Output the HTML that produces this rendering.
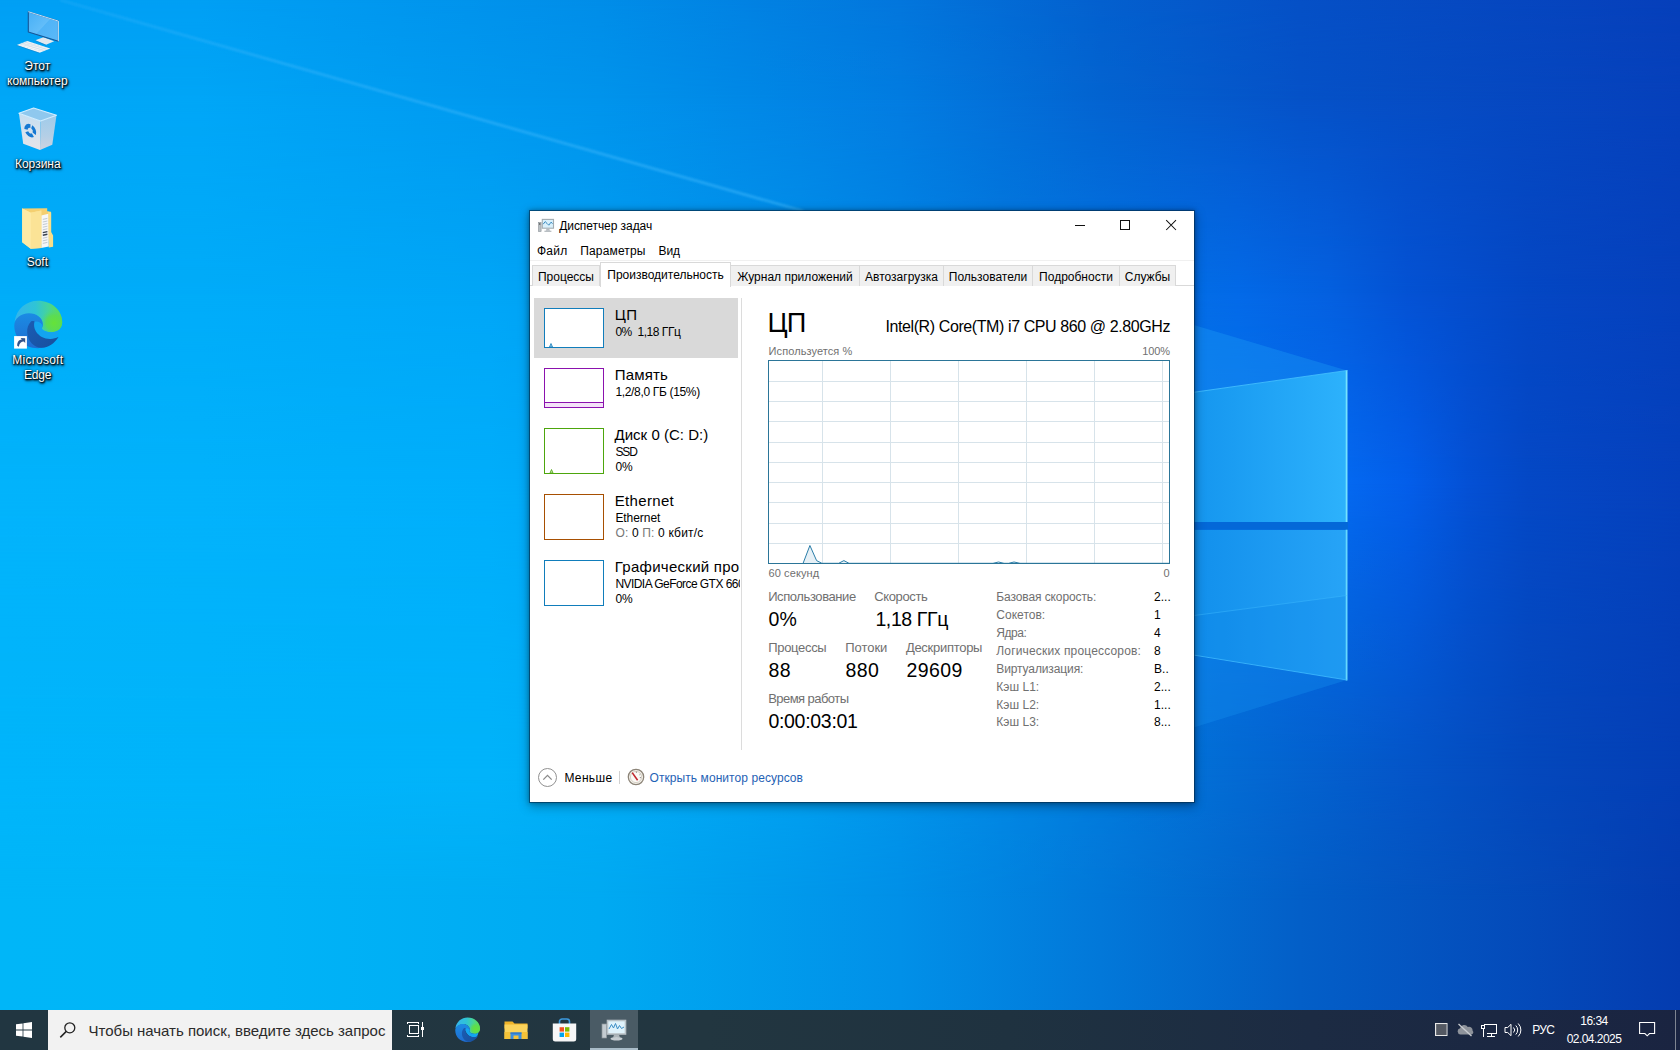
<!DOCTYPE html>
<html lang="ru">
<head>
<meta charset="utf-8">
<title>Диспетчер задач</title>
<style>
*{box-sizing:border-box;margin:0;padding:0}
html,body{width:1680px;height:1050px;overflow:hidden;background:#0078d7}
body{font-family:"Liberation Sans","DejaVu Sans",sans-serif;font-size:12px;color:#000;position:relative}
.abs{position:absolute}
#wall{position:absolute;left:0;top:0;width:1680px;height:1050px}
/* desktop icons */
.dicon{position:absolute;width:76px;text-align:center;color:#fff;font-size:12px;line-height:15px;
 text-shadow:0 1px 2px rgba(0,0,0,.95),0 0 3px rgba(0,0,0,.8),1px 1px 1px rgba(0,0,0,.7)}
.dicon svg{display:block;margin:0 auto}
.dl{position:absolute;margin-top:1px;width:100px;text-align:center;color:#fff;font-size:12px;line-height:1;white-space:nowrap;
 text-shadow:1px 1px 1.500px #000,0 1px 2px rgba(0,0,0,.85),1px 2px 3px rgba(0,0,0,.6),0 0 3px rgba(0,0,0,.55)}
/* taskbar */
#taskbar{position:absolute;left:0;top:1010px;width:1680px;height:40px;
 background:linear-gradient(90deg,#213641 0%,#223640 42%,#1f3240 60%,#1c2b43 78%,#1a2441 100%)}
#search{position:absolute;left:48px;top:0;width:344px;height:40px;background:#f2f2f2;color:#2b2b2b;font-size:15px}
#search span{position:absolute;left:40.600px;top:12.700px;white-space:nowrap;line-height:1;letter-spacing:-0.020px}
.tray{line-height:1}
.tray{position:absolute;color:#fff;font-size:12px;white-space:nowrap}
/* window */
#win{position:absolute;left:529px;top:210px;width:666px;height:593px;background:#fff;border:1px solid rgba(0,45,80,.6);background-clip:padding-box;
 box-shadow:0 3px 10px rgba(0,0,0,.34),0 0 4px rgba(0,0,0,.25)}
#win .t{position:absolute;white-space:nowrap;line-height:1}
.gray{color:#6d6d6d}
.tab{position:absolute;top:54px;height:21px;border:1px solid #d9d9d9;border-bottom:none;background:#f0f0f0;font-size:12px;text-align:center;line-height:22.800px;white-space:nowrap}
.tab.sel{top:51px;height:25px;background:#fff;line-height:25px;z-index:2}
.thumb{position:absolute;left:14px;width:60px;background:#fff;border:1px solid #117dbb}
.sname{position:absolute;left:84px;font-size:15px;white-space:nowrap;line-height:1}
.ssub{position:absolute;left:85px;font-size:12px;white-space:nowrap;line-height:1}
.lab{position:absolute;font-size:12.5px;color:#6d6d6d;white-space:nowrap;line-height:1}
.val{position:absolute;font-size:19px;white-space:nowrap;line-height:1}
.rl{position:absolute;left:466px;font-size:12px;color:#6d6d6d;white-space:nowrap;line-height:1}
.rv{position:absolute;left:624px;font-size:12px;white-space:nowrap;line-height:1}
</style>
</head>
<body>
<!--WALL-->
<svg id="wall" width="1680" height="1050" viewBox="0 0 1680 1050">
<defs>
<linearGradient id="wr0" x1="0" y1="0" x2="1" y2="0"><stop offset="0.0000" stop-color="#009ff4"/><stop offset="0.1190" stop-color="#009ff4"/><stop offset="0.3571" stop-color="#008de8"/><stop offset="0.5357" stop-color="#0276dc"/><stop offset="0.6548" stop-color="#0360ce"/><stop offset="0.7738" stop-color="#0550c6"/><stop offset="1.0000" stop-color="#063fba"/></linearGradient>
<linearGradient id="wm0" x1="0" y1="0" x2="0" y2="1050" gradientUnits="userSpaceOnUse"><stop offset="0.0000" stop-color="#fff" stop-opacity="1"/><stop offset="0.0952" stop-color="#fff" stop-opacity="0"/></linearGradient>
<mask id="wk0" maskUnits="userSpaceOnUse" x="0" y="0" width="1680" height="1050"><rect width="1680" height="1050" fill="url(#wm0)"/></mask>
<linearGradient id="wr1" x1="0" y1="0" x2="1" y2="0"><stop offset="0.0000" stop-color="#00a7f7"/><stop offset="0.1190" stop-color="#00a6f7"/><stop offset="0.3571" stop-color="#0094ec"/><stop offset="0.5357" stop-color="#027ce1"/><stop offset="0.6548" stop-color="#0364d1"/><stop offset="0.7738" stop-color="#0552c8"/><stop offset="1.0000" stop-color="#0640bb"/></linearGradient>
<linearGradient id="wm1" x1="0" y1="0" x2="0" y2="1050" gradientUnits="userSpaceOnUse"><stop offset="0.0952" stop-color="#fff" stop-opacity="1"/><stop offset="0.2810" stop-color="#fff" stop-opacity="0"/></linearGradient>
<mask id="wk1" maskUnits="userSpaceOnUse" x="0" y="0" width="1680" height="1050"><rect width="1680" height="1050" fill="url(#wm1)"/></mask>
<linearGradient id="wr2" x1="0" y1="0" x2="1" y2="0"><stop offset="0.0000" stop-color="#00adf9"/><stop offset="0.1190" stop-color="#00acf9"/><stop offset="0.2905" stop-color="#00a6f7"/><stop offset="0.4762" stop-color="#0090ea"/><stop offset="0.5952" stop-color="#027ae0"/><stop offset="0.7369" stop-color="#036ae8"/><stop offset="0.7917" stop-color="#0460e0"/><stop offset="0.8381" stop-color="#0452d4"/><stop offset="0.9095" stop-color="#0447c4"/><stop offset="1.0000" stop-color="#0540bc"/></linearGradient>
<linearGradient id="wm2" x1="0" y1="0" x2="0" y2="1050" gradientUnits="userSpaceOnUse"><stop offset="0.2810" stop-color="#fff" stop-opacity="1"/><stop offset="0.4571" stop-color="#fff" stop-opacity="0"/></linearGradient>
<mask id="wk2" maskUnits="userSpaceOnUse" x="0" y="0" width="1680" height="1050"><rect width="1680" height="1050" fill="url(#wm2)"/></mask>
<linearGradient id="wr3" x1="0" y1="0" x2="1" y2="0"><stop offset="0.0000" stop-color="#02b3fb"/><stop offset="0.1190" stop-color="#02b2fb"/><stop offset="0.2905" stop-color="#00aefb"/><stop offset="0.4762" stop-color="#0096ee"/><stop offset="0.5952" stop-color="#0280e6"/><stop offset="0.7369" stop-color="#0570ec"/><stop offset="0.8036" stop-color="#0468f0"/><stop offset="0.8381" stop-color="#035eea"/><stop offset="0.8750" stop-color="#0450d4"/><stop offset="0.9095" stop-color="#0448c6"/><stop offset="1.0000" stop-color="#0540bc"/></linearGradient>
<linearGradient id="wm3" x1="0" y1="0" x2="0" y2="1050" gradientUnits="userSpaceOnUse"><stop offset="0.4571" stop-color="#fff" stop-opacity="1"/><stop offset="0.7333" stop-color="#fff" stop-opacity="0"/></linearGradient>
<mask id="wk3" maskUnits="userSpaceOnUse" x="0" y="0" width="1680" height="1050"><rect width="1680" height="1050" fill="url(#wm3)"/></mask>
<linearGradient id="wr4" x1="0" y1="0" x2="1" y2="0"><stop offset="0.0000" stop-color="#00b5fb"/><stop offset="0.1190" stop-color="#00b4fa"/><stop offset="0.2905" stop-color="#01b3fa"/><stop offset="0.4762" stop-color="#00a0f0"/><stop offset="0.5952" stop-color="#0188e4"/><stop offset="0.7369" stop-color="#036ad3"/><stop offset="0.8381" stop-color="#0455c8"/><stop offset="0.9095" stop-color="#0448bc"/><stop offset="1.0000" stop-color="#043eb5"/></linearGradient>
<linearGradient id="wm4" x1="0" y1="0" x2="0" y2="1050" gradientUnits="userSpaceOnUse"><stop offset="0.7333" stop-color="#fff" stop-opacity="1"/><stop offset="0.8571" stop-color="#fff" stop-opacity="0"/></linearGradient>
<mask id="wk4" maskUnits="userSpaceOnUse" x="0" y="0" width="1680" height="1050"><rect width="1680" height="1050" fill="url(#wm4)"/></mask>
<linearGradient id="wr5" x1="0" y1="0" x2="1" y2="0"><stop offset="0.0000" stop-color="#00b6f8"/><stop offset="0.1190" stop-color="#00b5f8"/><stop offset="0.3571" stop-color="#00aaf2"/><stop offset="0.5357" stop-color="#0190e8"/><stop offset="0.6548" stop-color="#0278d9"/><stop offset="0.7738" stop-color="#035fc8"/><stop offset="1.0000" stop-color="#043cb0"/></linearGradient>
<linearGradient id="pane" x1="1195" y1="0" x2="1347" y2="0" gradientUnits="userSpaceOnUse"><stop offset="0" stop-color="#1596ef"/><stop offset="1" stop-color="#2db2fc"/></linearGradient>
<linearGradient id="pane2" x1="1195" y1="0" x2="1347" y2="0" gradientUnits="userSpaceOnUse"><stop offset="0" stop-color="#1290ec"/><stop offset="1" stop-color="#27a4f7"/></linearGradient>
<linearGradient id="rayg" x1="60" y1="0" x2="810" y2="0" gradientUnits="userSpaceOnUse"><stop offset="0" stop-color="#3cb6fb" stop-opacity=".25"/><stop offset=".3" stop-color="#3cb6fb" stop-opacity=".55"/><stop offset="1" stop-color="#3cb6fb" stop-opacity=".6"/></linearGradient>
<filter id="b1" x="-5%" y="-5%" width="110%" height="110%"><feGaussianBlur stdDeviation="1"/></filter>
</defs>
<rect width="1680" height="1050" fill="url(#wr5)"/>
<rect width="1680" height="901" fill="url(#wr4)" mask="url(#wk4)"/>
<rect width="1680" height="771" fill="url(#wr3)" mask="url(#wk3)"/>
<rect width="1680" height="481" fill="url(#wr2)" mask="url(#wk2)"/>
<rect width="1680" height="296" fill="url(#wr1)" mask="url(#wk1)"/>
<rect width="1680" height="101" fill="url(#wr0)" mask="url(#wk0)"/>
<!-- ray line to top-left -->
<line x1="60" y1="0" x2="803" y2="211" stroke="url(#rayg)" stroke-width="2.6" filter="url(#b1)"/>
<!-- rays near logo -->
<polygon points="1150,312 1347,370.5 1150,398.5" fill="#1c9cf4" opacity=".38"/>
<polygon points="1150,741 1347,680 1150,649" fill="#1590ee" opacity=".36"/>
<!-- panes -->
<polygon points="1150,398.5 1347,370.5 1347,522 1150,522" fill="url(#pane)"/>
<polygon points="1150,529.7 1347,529.7 1347,680 1150,648" fill="url(#pane2)"/>
<polygon points="1150,621.3 1347,595.5 1347,680 1150,648" fill="#0a80e6" opacity=".28"/>
<rect x="1150" y="522" width="198" height="7.7" fill="#0468d8"/>
<line x1="1346.6" y1="370" x2="1346.6" y2="522" stroke="#74e2ff" stroke-width="1.8"/>
<line x1="1346.6" y1="529.7" x2="1346.6" y2="680.5" stroke="#66d8ff" stroke-width="1.8"/>
<line x1="1150" y1="398.5" x2="1347" y2="370.5" stroke="#48c4ff" stroke-width="1" opacity=".8"/>
<line x1="1150" y1="648" x2="1347" y2="680" stroke="#40bcff" stroke-width="1" opacity=".8"/>
<line x1="1150" y1="621.3" x2="1347" y2="595.5" stroke="#40bcff" stroke-width="1" opacity=".45"/>
</svg>

<!--/WALL-->
<!--ICONS-->
<!-- This PC -->
<svg class="abs" style="left:8px;top:4px" width="60" height="56" viewBox="8 4 60 56">
<defs><linearGradient id="scr" x1="28" y1="12" x2="58" y2="40" gradientUnits="userSpaceOnUse"><stop offset="0" stop-color="#46aff6"/><stop offset=".5" stop-color="#62bdf9"/><stop offset=".52" stop-color="#50b4f7"/><stop offset="1" stop-color="#5ab8f8"/></linearGradient></defs>
<polygon points="35.300,40.300 43.500,37.300 54.200,41.300 46,44.800" fill="#e3e8ee"/>
<polygon points="35.300,40.300 46,44.800 46,45.600 35.300,41.100" fill="#1d6cb0" opacity=".55"/>
<polygon points="28.300,11.700 58.400,21.100 58.400,41.300 28.300,32" fill="url(#scr)" stroke="#175596" stroke-width="1.100" stroke-linejoin="round"/>
<path d="M28.300 11.700L58.400 21.100V41.300" fill="none" stroke="#d6efff" stroke-width=".9"/>
<polygon points="16.800,45 27.300,40.900 50.300,48.600 39.600,52.800" fill="#eef3f7"/>
<polygon points="16.800,45 39.600,52.800 39.600,53.600 16.800,45.800" fill="#1d6cb0" opacity=".45"/>
<path d="M20 45.100l8.800-3.400M23.500 46.300l8.800-3.400M27 47.500l8.800-3.400M30.500 48.700l8.800-3.400M34 49.900l8.800-3.400M37.500 51.100l8.800-3.400M21.500 43.200l22.600 7.600M24.500 42l22.600 7.600" stroke="#cdd9e3" stroke-width=".55"/>
</svg>
<!-- Recycle bin -->
<svg class="abs" style="left:8px;top:100px" width="60" height="56" viewBox="8 100 60 56">
<defs>
<linearGradient id="binL" x1="0" y1="113" x2="0" y2="150" gradientUnits="userSpaceOnUse"><stop offset="0" stop-color="#c4ddf0"/><stop offset=".6" stop-color="#d9e4ee"/><stop offset="1" stop-color="#e6e3e8"/></linearGradient>
<linearGradient id="binR" x1="0" y1="115" x2="0" y2="150" gradientUnits="userSpaceOnUse"><stop offset="0" stop-color="#9fcbea"/><stop offset=".6" stop-color="#b4cfe6"/><stop offset="1" stop-color="#cdd3e0"/></linearGradient>
</defs>
<polygon points="18.900,113.300 40.500,121.100 40,149.900 23.200,143.700" fill="url(#binL)"/>
<polygon points="40.500,121.100 56.500,115.200 52.300,144.800 40,149.900" fill="url(#binR)"/>
<polygon points="18.900,113.300 33.600,108 56.500,115.200 40.500,121.100" fill="#8fc8ee" stroke="#d4eeff" stroke-width="1.100" stroke-linejoin="round"/>
<g transform="translate(30.300,130.600) skewY(19) scale(.92,1)"><circle r="4.600" fill="none" stroke="#1679d2" stroke-width="3.700" stroke-dasharray="7.400 2.230" transform="rotate(-70)"/></g>
</svg>
<!-- Folder Soft -->
<svg class="abs" style="left:8px;top:200px" width="60" height="56" viewBox="8 200 60 56">
<defs><linearGradient id="fld" x1="22" y1="0" x2="42" y2="0" gradientUnits="userSpaceOnUse"><stop offset="0" stop-color="#fdeaa8"/><stop offset=".45" stop-color="#fce69c"/><stop offset="1" stop-color="#fae190"/></linearGradient></defs>
<polygon points="22.200,208.500 47.200,208.200 47.200,211.200 51,211.800 51,230 47,246 30,240" fill="#f4cf70"/>
<polygon points="41.200,215.500 48.500,213.800 48.800,246.600 41.200,248" fill="#f6f7f8"/>
<path d="M42.800 219.400l4.600-1M42.800 222l4.600-1M42.800 224.600l4.600-1M42.800 227.200l4.600-1M42.800 229.800l4.600-1M42.800 238.200l4.600-1M42.800 240.800l4.600-1M42.800 243.400l4.600-1" stroke="#b4bcc6" stroke-width=".8"/>
<path d="M42.800 232.600l4.600-1M42.800 235.200l4.600-1" stroke="#39424e" stroke-width="1.400"/>
<polygon points="22.200,208.500 30.800,212.700 41.300,210.600 41.300,248 30.700,248.800 22.200,242.200" fill="url(#fld)"/>
<polygon points="30.800,212.700 41.300,210.600 41.300,248 30.700,248.800" fill="#fbe396"/>
<polygon points="22.200,208.500 30.800,212.700 30.700,248.800 22.200,242.200" fill="#fdeaa6"/>
<polygon points="47.600,211.600 51.200,212.400 51.200,232 53.100,235.500 53.100,246.800 48.800,247.400 48.500,213.800" fill="#f9de8a"/>
</svg>
<!-- Edge -->
<svg class="abs" style="left:8px;top:296px" width="60" height="56" viewBox="0 0 60 56">
<defs>
<linearGradient id="eg1" x1="6" y1="0" x2="54" y2="0" gradientUnits="userSpaceOnUse"><stop offset="0" stop-color="#35b4ee"/><stop offset=".45" stop-color="#2fc4d6"/><stop offset=".72" stop-color="#46d49a"/><stop offset="1" stop-color="#62e040"/></linearGradient>
<radialGradient id="eg2" cx="46" cy="27" r="14" gradientUnits="userSpaceOnUse"><stop offset="0" stop-color="#66e238"/><stop offset=".55" stop-color="#5cdc50" stop-opacity=".9"/><stop offset="1" stop-color="#4cd488" stop-opacity="0"/></radialGradient>
<linearGradient id="eg3" x1="0" y1="17" x2="0" y2="52" gradientUnits="userSpaceOnUse"><stop offset="0" stop-color="#1b8ce4"/><stop offset="1" stop-color="#1f6cd0"/></linearGradient>
<linearGradient id="eg4" x1="20" y1="26" x2="48" y2="50" gradientUnits="userSpaceOnUse"><stop offset="0" stop-color="#1a5cb4"/><stop offset="1" stop-color="#18509e"/></linearGradient>
<g id="edgelogo">
<path d="M6.600 25.500C8.500 12.500 18.500 4.700 30 4.700C43.500 4.700 54.200 14 54.200 26C54.200 32.500 49.500 36.200 43.500 36.200C39 36.200 35.200 35 33.600 32.500C35.500 29.500 35 24 30.500 20.500C24 16 13 17.500 6.600 25.500Z" fill="url(#eg1)"/>
<path d="M6.600 25.500C8.500 12.500 18.500 4.700 30 4.700C43.500 4.700 54.200 14 54.200 26C54.200 32.500 49.500 36.200 43.500 36.200C39 36.200 35.200 35 33.600 32.500C35.500 29.500 35 24 30.500 20.500C24 16 13 17.500 6.600 25.500Z" fill="url(#eg2)"/>
<path d="M6.300 29.500C6.300 22.500 13 17.200 21 17.200C28.500 17.200 34.800 22 34.800 28C34.800 30 34.200 31.500 33.600 32.500C31.500 30 28 29.500 25.500 31C22 33.500 22 41 27 46C30 49 34.500 50.500 38.500 50.800C35.500 51.800 32.500 52.200 29.500 52.200C16.500 52.200 6.300 42.500 6.300 29.500Z" fill="url(#eg3)"/>
<path d="M25 26.500C28 24.500 32.500 25.500 34.300 29C34.300 31 33.900 32 33.600 32.500C35.200 35 39 36.200 43.500 36.200C46.500 36.200 49 35.300 51 33.800C50.500 38 49 41 46.500 43C41 44 35 42.500 31 38.500C27.500 35 25.500 30.500 25 26.500Z" fill="#13a4f0"/>
<path d="M23 25.400C20 28.500 18.800 32.500 19.200 37C19.800 44.500 25.500 51.700 33.500 51.700C40.500 51.700 46.500 47.500 50.600 40.800C48 42.200 45.500 42.900 42.500 43C36.500 43.200 31 40.200 28 35.500C26 32.300 25.600 28.500 26.500 25.400C25.300 25 24 25 23 25.400Z" fill="url(#eg4)"/>
</g>
</defs>
<use href="#edgelogo"/>
<rect x="6.100" y="40.100" width="12.800" height="12.500" fill="#fff"/>
<path d="M9.200 49.800C9 46 11 43.600 13.800 43.400L12.600 42.100L17.200 42.300L17.200 46.900L15.800 45.500C13.200 45.500 11.500 47 10.800 50.800Z" fill="#34548c"/>
</svg>

<span class="dl" id="dl0" style="left:-12.7px;top:59.44px;">Этот</span>
<span class="dl" id="dl1" style="left:-12.7px;top:73.84px;">компьютер</span>
<span class="dl" id="dl2" style="left:-12.2px;top:157.24px;">Корзина</span>
<span class="dl" id="dl3" style="left:-12.7px;top:254.74px;">Soft</span>
<span class="dl" id="dl4" style="left:-12.2px;top:353.14px;letter-spacing:.25px;">Microsoft</span>
<span class="dl" id="dl5" style="left:-12.4px;top:368.44px;letter-spacing:-.2px;">Edge</span>

<!--/ICONS-->
<!--WINDOW-->
<div id="win">
<!-- title icon -->
<svg class="abs" style="left:7px;top:6px" width="18" height="18" viewBox="0 0 18 18">
<rect x="1.5" y="5.5" width="2.6" height="9" fill="#b9c0c4" stroke="#8a9298" stroke-width=".6"/>
<circle cx="2.8" cy="7" r=".7" fill="#333"/>
<rect x="5.3" y="2.4" width="11.2" height="8.8" fill="#d9f0fb" stroke="#a3acb1" stroke-width="1.1"/>
<polyline points="6.2,7.2 8.2,4.6 10,6.4 11.8,8.2 14,5.2 15.6,6.6" fill="none" stroke="#2a7fb8" stroke-width=".9"/>
<path d="M9.6 11.6h2.6l.8 2.2h-4.2z" fill="#b4bbc0"/>
<rect x="7.4" y="13.7" width="7" height="1.1" fill="#a9b0b5"/>
</svg>
<!-- caption buttons -->
<svg class="abs" style="left:526px;top:0" width="138" height="30" viewBox="0 0 138 30" shape-rendering="crispEdges">
<rect x="19" y="14" width="10" height="1" fill="#111"/>
<rect x="64.5" y="9.5" width="9" height="9" fill="none" stroke="#111" stroke-width="1"/>
<g shape-rendering="geometricPrecision" stroke="#111" stroke-width="1.05" fill="none"><path d="M110.2 9.2l9.8 9.8M120 9.2l-9.8 9.8"/></g>
</svg>
<div class="abs" style="left:0;top:49px;width:664px;height:1px;background:#f0f0f0"></div>
<!-- tab strip -->
<div class="abs" style="left:0;top:74px;width:664px;height:1px;background:#d9d9d9"></div>
<div class="tab" style="left:2px;width:68px"><span id="tab0">Процессы</span></div>
<div class="tab sel" style="left:70px;width:131px"><span id="tab1">Производительность</span></div>
<div class="tab" style="left:200px;width:130px"><span id="tab2">Журнал приложений</span></div>
<div class="tab" style="left:329px;width:85px"><span id="tab3">Автозагрузка</span></div>
<div class="tab" style="left:413px;width:90px"><span id="tab4">Пользователи</span></div>
<div class="tab" style="left:502px;width:88px"><span id="tab5">Подробности</span></div>
<div class="tab" style="left:589px;width:57px"><span id="tab6">Службы</span></div>
<!-- sidebar -->
<div class="abs" style="left:4px;top:87px;width:206px;height:460px;overflow:hidden" id="side">
 <div class="abs" style="left:0;top:0;width:204px;height:60px;background:#d9d9d9"></div>
 <div class="thumb" style="left:10px;top:10px;height:40px;border-color:#117dbb"><svg width="58" height="38" style="display:block"><path d="M4.5 38L6 34.5L7.5 38Z" fill="#9fcbe6" stroke="#117dbb" stroke-width=".8"/></svg></div>
 <div class="thumb" style="left:10px;top:70px;height:40px;border-color:#8b12ae"><div style="position:absolute;left:0;right:0;bottom:0;height:5px;background:#f4e2f8;border-top:1px solid #8b12ae"></div></div>
 <div class="thumb" style="left:10px;top:130px;height:46px;border-color:#4da60c"><svg width="58" height="44" style="display:block"><path d="M5 44L6.5 40.5L8 44Z" fill="#cfe8b8" stroke="#4da60c" stroke-width=".8"/></svg></div>
 <div class="thumb" style="left:10px;top:196px;height:46px;border-color:#a74f01"></div>
 <div class="thumb" style="left:10px;top:262px;height:46px;border-color:#117dbb"></div>
</div>
<div class="abs" style="left:211px;top:87px;width:1px;height:452px;background:#dcdcdc"></div>
<!-- graph -->
<svg class="abs" style="left:238px;top:149px" width="402" height="204" viewBox="0 0 402 204">
<rect x="0" y="0" width="402" height="204" fill="#fff"/>
<g stroke="#d7e3ea" stroke-width="1" shape-rendering="crispEdges">
<path d="M54.5 1V203M122.5 1V203M190.5 1V203M258.5 1V203M326.5 1V203M394.5 1V203"/>
<path d="M1 21.500H401M1 41.500H401M1 61.500H401M1 82.500H401M1 102.500H401M1 122.500H401M1 142.500H401M1 163.500H401M1 183.500H401"/>
</g>
<path d="M0.5 203.500 L35 203.500 L41.900 185.500 L48.600 200.600 L53.900 203.300 L70.700 203.300 L75.900 200.600 L81 203.300 L225 203.300 L230.500 202 L236 203.300 L240.600 203.300 L246 202 L252 203.300 L401.500 203.300" fill="#e6f0f6" stroke="#2a7da8" stroke-width="1"/>
<rect x=".5" y=".5" width="401" height="203" fill="none" stroke="#2b7598" stroke-width="1" shape-rendering="crispEdges"/>
</svg>
<!-- footer -->
<svg class="abs" style="left:7px;top:556px" width="22" height="22" viewBox="0 0 22 22"><circle cx="10.5" cy="10.5" r="9" fill="#fff" stroke="#919191" stroke-width="1"/><path d="M6.3 12.6L10.5 8.4L14.7 12.6" fill="none" stroke="#8a8a8a" stroke-width="1.3"/></svg>
<div class="abs" style="left:89px;top:560px;width:1px;height:13px;background:#d0d0d0"></div>
<svg class="abs" style="left:97px;top:557px" width="18" height="18" viewBox="0 0 18 18"><circle cx="9" cy="9" r="7.7" fill="#f4f1ea" stroke="#8c8478" stroke-width="1.3"/><circle cx="9" cy="9" r="5.6" fill="#fbfaf6" stroke="#c9c2b4" stroke-width=".7"/><path d="M5.2 4.6L10.6 12.2" stroke="#c0272d" stroke-width="1.6" fill="none"/><path d="M9.4 3.6v1.3M13.4 6.2l-1 .7M14 9.6h-1.2" stroke="#666" stroke-width=".7"/></svg>
<span class="t" id="t0" style="top:9.04px;font-size:12px;left:29.20px;letter-spacing:-0.062px;">Диспетчер задач</span>
<span class="t" id="t1" style="top:33.84px;font-size:12px;left:7.00px;letter-spacing:0.231px;">Файл</span>
<span class="t" id="t2" style="top:33.84px;font-size:12px;left:50.20px;letter-spacing:0.163px;">Параметры</span>
<span class="t" id="t3" style="top:33.84px;font-size:12px;left:128.60px;letter-spacing:-0.093px;">Вид</span>
<span class="t" id="t4" style="top:95.80px;font-size:15px;left:84.80px;letter-spacing:0.400px;">ЦП</span>
<span class="t" id="t5" style="top:114.64px;font-size:12px;left:85.40px;letter-spacing:-0.470px;">0%&nbsp; 1,18 ГГц</span>
<span class="t" id="t6" style="top:156.00px;font-size:15px;left:84.80px;letter-spacing:0.175px;">Память</span>
<span class="t" id="t7" style="top:174.84px;font-size:12px;left:85.40px;letter-spacing:-0.332px;">1,2/8,0 ГБ (15%)</span>
<span class="t" id="t8" style="top:216.10px;font-size:15px;left:84.50px;letter-spacing:0.026px;">Диск 0 (C: D:)</span>
<span class="t" id="t9" style="top:234.64px;font-size:12px;left:85.40px;letter-spacing:-1.100px;">SSD</span>
<span class="t" id="t10" style="top:249.74px;font-size:12px;left:85.40px;letter-spacing:0.048px;">0%</span>
<span class="t" id="t11" style="top:282.20px;font-size:15px;left:84.80px;letter-spacing:0.323px;">Ethernet</span>
<span class="t" id="t12" style="top:300.84px;font-size:12px;left:85.40px;letter-spacing:-0.054px;">Ethernet</span>
<span class="t" id="t13" style="top:316.14px;font-size:12px;left:85.40px;letter-spacing:0.168px;"><span style="color:#767676">О:</span> 0 <span style="color:#767676">П:</span> 0 кбит/с</span>
<span class="t" id="t14" style="top:348.20px;font-size:15px;left:84.80px;letter-spacing:0.27px;width:125.5px;overflow:hidden;height:18px">Графический процессор 0</span>
<span class="t" id="t15" style="top:366.84px;font-size:12px;left:85.40px;letter-spacing:-0.55px;width:124.9px;overflow:hidden;height:15px">NVIDIA GeForce GTX 660</span>
<span class="t" id="t16" style="top:381.54px;font-size:12px;left:85.40px;letter-spacing:0.048px;">0%</span>
<span class="t" id="t17" style="top:97.98px;font-size:27.2px;left:237.60px;letter-spacing:-0.9px">ЦП</span>
<span class="t" id="t18" style="top:107.76px;font-size:16px;right:24.00px;letter-spacing:-0.404px;">Intel(R) Core(TM) i7 CPU 860 @ 2.80GHz</span>
<span class="t" id="t19" style="top:135.19px;font-size:11px;left:238.60px;letter-spacing:0.076px;color:#707070">Используется %</span>
<span class="t" id="t20" style="top:135.19px;font-size:11px;right:24.00px;letter-spacing:-0.105px;color:#707070">100%</span>
<span class="t" id="t21" style="top:356.89px;font-size:11px;left:238.40px;letter-spacing:0.120px;color:#707070">60 секунд</span>
<span class="t" id="t22" style="top:356.89px;font-size:11px;right:24.40px;color:#707070">0</span>
<span class="t" id="t23" style="top:379.00px;font-size:13px;left:238.20px;letter-spacing:-0.411px;color:#707070">Использование</span>
<span class="t" id="t24" style="top:379.00px;font-size:13px;left:344.30px;letter-spacing:-0.385px;color:#707070">Скорость</span>
<span class="t" id="t25" style="top:399.19px;font-size:19.5px;left:238.40px;letter-spacing:0.176px;">0%</span>
<span class="t" id="t26" style="top:399.19px;font-size:19.5px;left:345.40px;letter-spacing:-0.379px;">1,18 ГГц</span>
<span class="t" id="t27" style="top:429.90px;font-size:13px;left:238.20px;letter-spacing:-0.316px;color:#707070">Процессы</span>
<span class="t" id="t28" style="top:429.90px;font-size:13px;left:315.20px;letter-spacing:-0.020px;color:#707070">Потоки</span>
<span class="t" id="t29" style="top:429.90px;font-size:13px;left:375.90px;letter-spacing:-0.283px;color:#707070">Дескрипторы</span>
<span class="t" id="t30" style="top:449.59px;font-size:19.5px;left:238.40px;letter-spacing:0.400px;">88</span>
<span class="t" id="t31" style="top:449.59px;font-size:19.5px;left:315.50px;letter-spacing:0.400px;">880</span>
<span class="t" id="t32" style="top:449.59px;font-size:19.5px;left:376.50px;letter-spacing:0.400px;">29609</span>
<span class="t" id="t33" style="top:481.10px;font-size:13px;left:238.20px;letter-spacing:-0.551px;color:#707070">Время работы</span>
<span class="t" id="t34" style="top:501.39px;font-size:19.5px;left:238.40px;letter-spacing:-0.293px;">0:00:03:01</span>
<span class="t" id="t35" style="top:379.84px;font-size:12px;left:466.30px;letter-spacing:-0.104px;color:#707070">Базовая скорость:</span>
<span class="t" id="t36" style="top:379.84px;font-size:12px;left:624.10px;">2...</span>
<span class="t" id="t37" style="top:397.79px;font-size:12px;left:466.30px;letter-spacing:0.024px;color:#707070">Сокетов:</span>
<span class="t" id="t38" style="top:397.79px;font-size:12px;left:624.10px;">1</span>
<span class="t" id="t39" style="top:415.74px;font-size:12px;left:466.30px;letter-spacing:-0.484px;color:#707070">Ядра:</span>
<span class="t" id="t40" style="top:415.74px;font-size:12px;left:624.10px;">4</span>
<span class="t" id="t41" style="top:433.69px;font-size:12px;left:466.30px;letter-spacing:0.164px;color:#707070">Логических процессоров:</span>
<span class="t" id="t42" style="top:433.69px;font-size:12px;left:624.10px;">8</span>
<span class="t" id="t43" style="top:451.64px;font-size:12px;left:466.30px;letter-spacing:-0.117px;color:#707070">Виртуализация:</span>
<span class="t" id="t44" style="top:451.64px;font-size:12px;left:624.10px;">В..</span>
<span class="t" id="t45" style="top:469.59px;font-size:12px;left:466.30px;letter-spacing:0.025px;color:#707070">Кэш L1:</span>
<span class="t" id="t46" style="top:469.59px;font-size:12px;left:624.10px;">2...</span>
<span class="t" id="t47" style="top:487.54px;font-size:12px;left:466.30px;letter-spacing:0.025px;color:#707070">Кэш L2:</span>
<span class="t" id="t48" style="top:487.54px;font-size:12px;left:624.10px;">1...</span>
<span class="t" id="t49" style="top:505.49px;font-size:12px;left:466.30px;letter-spacing:0.025px;color:#707070">Кэш L3:</span>
<span class="t" id="t50" style="top:505.49px;font-size:12px;left:624.10px;">8...</span>
<span class="t" id="t51" style="top:560.74px;font-size:12px;left:34.40px;letter-spacing:0.343px;">Меньше</span>
<span class="t" id="t52" style="top:560.74px;font-size:12px;left:119.60px;letter-spacing:0.067px;color:#1f62b5">Открыть монитор ресурсов</span>
</div>

<!--/WINDOW-->
<!--TASKBAR-->
<div id="taskbar">
<!-- start -->
<svg class="abs" style="left:16px;top:12px" width="16" height="16" viewBox="0 0 16 16"><path d="M0 2.3L6.6 1.4V7.600H0zM7.400 1.300L16 .1V7.600H7.400zM0 8.400H6.600V14.600L0 13.700zM7.400 8.400H16V15.900L7.400 14.700z" fill="#fff"/></svg>
<!-- search -->
<div id="search">
<svg class="abs" style="left:11px;top:11px" width="18" height="18" viewBox="0 0 18 18"><circle cx="10.800" cy="6.800" r="5" fill="none" stroke="#222" stroke-width="1.300"/><path d="M7.300 10.400L1.300 16.400" stroke="#222" stroke-width="1.500"/></svg>
<span id="stext">Чтобы начать поиск, введите здесь запрос</span>
</div>
<!-- task view -->
<svg class="abs" style="left:406px;top:11px" width="20" height="18" viewBox="0 0 20 18" fill="none" stroke="#fff" stroke-width="1.100" shape-rendering="crispEdges">
<rect x="3.500" y="4.500" width="9" height="8"/><path d="M1.500 1.500H12.500M1.500 15.500H12.500M1.500 1V3M12.500 1V3M1.500 14V16M12.500 14V16"/><path d="M16.500 1V6M16.500 8.500V16"/><rect x="15.500" y="6.500" width="2" height="2" fill="#fff"/>
</svg>
<!-- edge -->
<svg class="abs" style="left:451.500px;top:5.200px" width="31" height="29" viewBox="0 0 60 56"><use href="#edgelogo"/></svg>
<!-- explorer -->
<svg class="abs" style="left:503px;top:9px" width="26" height="22" viewBox="0 0 26 22">
<path d="M1.500 2.500h8l2 2h13v5h-23z" fill="#f0b429"/>
<rect x="1.500" y="5.500" width="23" height="14.500" fill="#fbd45c"/>
<path d="M1.500 13h23v7h-23z" fill="#f5c338"/>
<path d="M7.500 20v-6.500h11V20h-3v-3.600h-5V20z" fill="#3b8fe0"/>
<rect x="7.500" y="13.500" width="11" height="1.500" fill="#2f7bd0"/>
</svg>
<!-- store -->
<svg class="abs" style="left:552px;top:7px" width="25" height="26" viewBox="0 0 25 26">
<path d="M7.500 7V4.600a2.600 2.600 0 012.600-2.600h4.800a2.600 2.600 0 012.600 2.600V7" fill="none" stroke="#3b9be0" stroke-width="1.600"/>
<path d="M.8 6.500h23.400v15.500a2.500 2.500 0 01-2.500 2.500H3.300a2.500 2.500 0 01-2.500-2.500z" fill="#f7f7f7"/>
<rect x="7.600" y="10.200" width="4.400" height="4.400" fill="#f25022"/><rect x="13" y="10.200" width="4.400" height="4.400" fill="#7fba00"/>
<rect x="7.600" y="15.600" width="4.400" height="4.400" fill="#00a4ef"/><rect x="13" y="15.600" width="4.400" height="4.400" fill="#ffb900"/>
</svg>
<!-- task manager active -->
<div class="abs" style="left:590px;top:0;width:48px;height:40px;background:#4a5b65"></div>
<div class="abs" style="left:590px;top:38px;width:48px;height:2px;background:#a9bcc8"></div>
<svg class="abs" style="left:601px;top:9px" width="26" height="23" viewBox="0 0 26 23">
<rect x="1" y="5" width="4.600" height="14" fill="#c3cbd0" stroke="#8d969c" stroke-width=".7"/>
<rect x="6.500" y="1.500" width="18" height="13.500" fill="#dff2fb" stroke="#b9c1c6" stroke-width="1.600"/>
<polyline points="8,10 10.500,5.500 12.500,9 14.500,4.500 16.500,10 18.500,6.500 20.500,9.500 23,8" fill="none" stroke="#3a8cc4" stroke-width="1"/>
<path d="M13 15.800h5l1 3h-7z" fill="#aeb6bb"/><ellipse cx="15.500" cy="19.800" rx="6" ry="1.800" fill="#c5ccd1"/>
</svg>
<!-- tray -->
<svg class="abs" style="left:1435px;top:13px" width="13" height="13" viewBox="0 0 13 13"><rect x=".5" y=".5" width="11.500" height="12" fill="#6b7078" stroke="#e8e8e8" stroke-width="1"/><path d="M2 3h9M2 5h9M2 7h9M2 9h9M2 11h9M3 1v11M5 1v11M7 1v11M9 1v11M11 1v11" stroke="#3a3f48" stroke-width=".5"/></svg>
<svg class="abs" style="left:1456px;top:13px" width="18" height="14" viewBox="0 0 18 14"><path d="M4.500 11.500a3.200 3.200 0 01-.4-6.300A4.200 4.200 0 0111.800 4a3.600 3.600 0 014.800 3.700 2.300 2.300 0 01-.8 3.800z" fill="#8e939b"/><path d="M2.500 1L15.500 13" stroke="#c9ccd1" stroke-width="1.300"/></svg>
<svg class="abs" style="left:1480px;top:13px" width="18" height="15" viewBox="0 0 18 15" fill="none" stroke="#fff" stroke-width="1.100" shape-rendering="crispEdges"><path d="M3.500 1.500H16.500V10.500H6.500"/><path d="M7 13.500H15M11.500 10.500V13.500"/><rect x="1.500" y="2.500" width="3" height="3"/><path d="M3.500 5.500V13.500"/></svg>
<svg class="abs" style="left:1504px;top:12px" width="19" height="16" viewBox="0 0 19 16" fill="none" stroke="#fff" stroke-width="1"><path d="M1 5.500h2.700L7 2.300v11.400L3.700 10.500H1z"/><path d="M9.500 5.500a3.500 3.500 0 010 5M11.800 3.500a6.300 6.300 0 010 9M14.200 1.500a9.200 9.200 0 010 13"/></svg>
<span class="tray" id="tr0" style="left:1532.300px;top:14px;letter-spacing:-.75px">РУС</span>
<span class="tray" id="tr1" style="left:1564px;width:60px;text-align:center;top:5.200px;letter-spacing:-.5px">16:34</span>
<span class="tray" id="tr2" style="left:1564px;width:60px;text-align:center;top:23.400px;letter-spacing:-.55px">02.04.2025</span>
<svg class="abs" style="left:1639px;top:11px" width="17" height="17" viewBox="0 0 17 17" fill="none" stroke="#fff" stroke-width="1.100"><path d="M.6 1.500H15.600V12.500H10.500L8.200 14.800L5.900 12.500H.6z"/></svg>
<div class="abs" style="left:1675px;top:0;width:1px;height:40px;background:#7f8591"></div>
</div>

<!--/TASKBAR-->
</body>
</html>
